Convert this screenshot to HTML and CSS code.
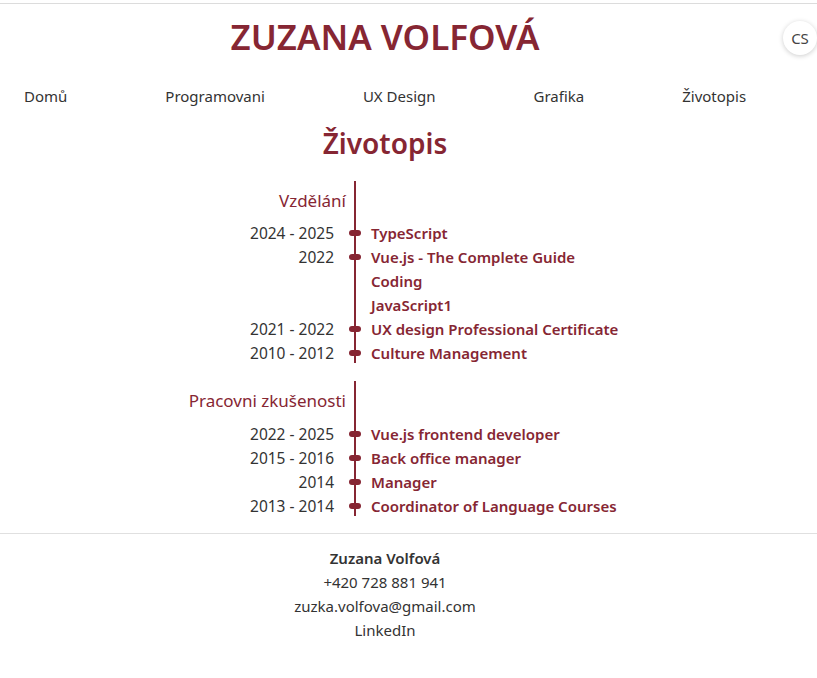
FILE: index.html
```html
<!DOCTYPE html>
<html lang="cs">
<head>
<meta charset="utf-8">
<title>Zuzana Volfová – Životopis</title>
<link rel="stylesheet" href="styles.css">
</head>
<body>
<div class="page">
  <header class="header">
    <h1 class="site-title">ZUZANA VOLFOVÁ</h1>
    <button class="lang">CS</button>
  </header>
  <nav class="nav">
    <a href="#">Domů</a>
    <a href="#">Programovani</a>
    <a href="#">UX Design</a>
    <a href="#">Grafika</a>
    <a href="#">Životopis</a>
  </nav>
  <main class="main">
    <h2 class="page-title">Životopis</h2>

    <section class="timeline">
      <div class="sec-head">Vzdělání</div>
      <div class="date">2024 - 2025</div><div class="dot"></div><div class="title">TypeScript</div>
      <div class="date">2022</div><div class="dot"></div><div class="title">Vue.js - The Complete Guide</div>
      <div class="date"></div><div class="nodot"></div><div class="title">Coding</div>
      <div class="date"></div><div class="nodot"></div><div class="title">JavaScript1</div>
      <div class="date">2021 - 2022</div><div class="dot"></div><div class="title">UX design Professional Certificate</div>
      <div class="date">2010 - 2012</div><div class="dot"></div><div class="title">Culture Management</div>
    </section>

    <section class="timeline work">
      <div class="sec-head">Pracovni zkušenosti</div>
      <div class="date">2022 - 2025</div><div class="dot"></div><div class="title">Vue.js frontend developer</div>
      <div class="date">2015 - 2016</div><div class="dot"></div><div class="title">Back office manager</div>
      <div class="date">2014</div><div class="dot"></div><div class="title">Manager</div>
      <div class="date">2013 - 2014</div><div class="dot"></div><div class="title">Coordinator of Language Courses</div>
    </section>
  </main>
</div>
<footer class="footer">
  <div class="footer-inner">
    <strong>Zuzana Volfová</strong>
    <span>+420 728 881 941</span>
    <span>zuzka.volfova@gmail.com</span>
    <a href="#">LinkedIn</a>
  </div>
</footer>
</body>
</html>
```
FILE: styles.css
```css
* { box-sizing: border-box; }
html, body { margin: 0; padding: 0; }
body {
  font-family: "Noto Sans", "Open Sans", sans-serif;
  font-size: 16px;
  color: #333;
  background: #fff;
  border-top: 1px solid #dcdcdc;
  margin-top: 3px;
}
.page { width: 770px; }
.header {
  height: 66px;
  display: flex;
  justify-content: center;
  align-items: flex-start;
}
.site-title {
  margin: 11px 0 0;
  font-size: 35px;
  font-weight: 600;
  color: #862633;
  line-height: 44px;
}
.lang {
  position: absolute;
  top: 21px;
  left: 783px;
  width: 34px;
  height: 34px;
  border-radius: 50%;
  border: none;
  background: #fff;
  box-shadow: 0 1px 5px rgba(0,0,0,0.2);
  font-family: inherit;
  font-size: 15px;
  color: #444;
  padding: 0;
}
.nav {
  display: flex;
  gap: 98px;
  padding-left: 24px;
  height: 52px;
  align-items: center;
}
.nav a { color: #333; text-decoration: none; font-size: 15px; }
.main { display: flex; flex-direction: column; }
.page-title {
  text-align: center;
  margin: 0;
  font-size: 28px;
  font-weight: 600;
  color: #862633;
  line-height: 42px;
  height: 59px;
}
.timeline {
  display: grid;
  grid-template-columns: 347px 16px 1fr;
  grid-template-rows: 40px;
  grid-auto-rows: 24px;
  background: linear-gradient(#862633, #862633) no-repeat 354px 0 / 2px calc(100% - 2px);
}
.timeline.work { margin-top: 16px; grid-template-rows: 41px; }
.sec-head {
  grid-column: 1;
  text-align: right;
  font-size: 17px;
  color: #862633;
  line-height: 40px;
  padding-right: 1px;
}
.date {
  grid-column: 1;
  text-align: right;
  padding-right: 13px;
  line-height: 24px;
  font-size: 15.5px;
  color: #333;
}
.dot, .nodot { grid-column: 2; align-self: center; justify-self: center; }
.dot {
  width: 12px;
  height: 6px;
  border-radius: 3px;
  background: #862633;
}
.title {
  grid-column: 3;
  padding-left: 8px;
  font-weight: 600;
  color: #862633;
  line-height: 24px;
  font-size: 15px;
}
.footer {
  border-top: 1px solid #e0e0e0;
  margin-top: 15px;
  padding: 12px 0 30px;
}
.footer-inner {
  width: 770px;
  display: flex;
  flex-direction: column;
  align-items: center;
  line-height: 24px;
  font-size: 15px;
  color: #333;
}
.footer-inner strong { font-weight: 600; }
.footer-inner a { color: #333; text-decoration: none; }
```
